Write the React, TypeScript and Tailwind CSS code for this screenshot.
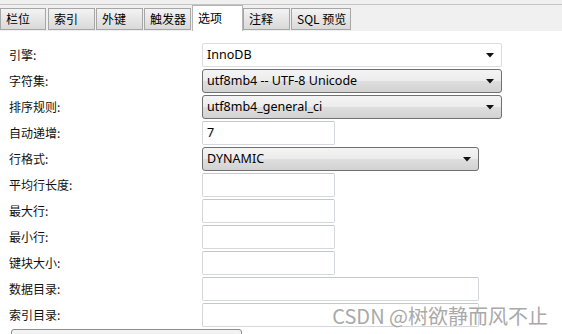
import React from "react";

const tabs = [
  { label: "栏位", w: "w-[46px]", gap: "" },
  { label: "索引", w: "w-[47px]", gap: "ml-[2px]" },
  { label: "外键", w: "w-[47px]", gap: "ml-[1px]" },
  { label: "触发器", w: "w-[47px]", gap: "ml-[1px]" },
  { label: "选项", w: "w-[51px]", gap: "", active: true },
  { label: "注释", w: "w-[47px]", gap: "" },
  { label: "SQL 预览", w: "w-[60px]", gap: "ml-[1px]" },
];

const cjk = "font-['Noto_Sans_CJK_SC','Noto_Sans',sans-serif]";
const ui = "font-['Noto_Sans','Noto_Sans_CJK_SC',sans-serif]";

function Arrow() {
  return (
    <svg width="8" height="5" viewBox="0 0 8 5" className="shrink-0">
      <path d="M0 0 H8 L4 4.5 Z" fill="#111" />
    </svg>
  );
}

function Combo({ value, width, flat = false }: { value: string; width: string; flat?: boolean }) {
  const skin = flat
    ? "bg-white border-[#d9dce1] rounded-[2px]"
    : "bg-[linear-gradient(#f4f4f4_0%,#ececec_48%,#dedede_52%,#d2d2d2_100%)] border-[#707070] rounded-[3px]";
  return (
    <div className={`flex h-[24px] ${width} items-center justify-between border pl-[4px] pr-[7px] ${skin}`}>
      <span className={`${ui} text-[12.5px] text-black`}>{value}</span>
      <Arrow />
    </div>
  );
}

function Field({ value = "", width = "w-[133px]" }: { value?: string; width?: string }) {
  return (
    <div className={`flex h-[24px] ${width} items-center rounded-[2px] border border-[#d4d7dd] border-t-[#c3c6cc] bg-white pl-[4px]`}>
      <span className={`${ui} text-[12.5px] text-black`}>{value}</span>
    </div>
  );
}

const rows: { label: string; control: React.ReactNode }[] = [
  { label: "引擎:", control: <Combo value="InnoDB" width="w-[300px]" flat /> },
  { label: "字符集:", control: <Combo value="utf8mb4 -- UTF-8 Unicode" width="w-[300px]" /> },
  { label: "排序规则:", control: <Combo value="utf8mb4_general_ci" width="w-[300px]" /> },
  { label: "自动递增:", control: <Field value="7" /> },
  { label: "行格式:", control: <Combo value="DYNAMIC" width="w-[277px]" /> },
  { label: "平均行长度:", control: <Field /> },
  { label: "最大行:", control: <Field /> },
  { label: "最小行:", control: <Field /> },
  { label: "键块大小:", control: <Field /> },
  { label: "数据目录:", control: <Field width="w-[277px]" /> },
  { label: "索引目录:", control: <Field width="w-[277px]" /> },
];

export default function App() {
  return (
    <div className="relative h-[334px] w-[562px] overflow-hidden bg-white">
      <div className="h-[4px] bg-[#f0f0f0]" />
      <div className="h-px bg-[#c4c4c4]" />
      <div className="flex h-[26px] items-end bg-[#f0f0f0]">
        {tabs.map((t) =>
          t.active ? (
            <div
              key={t.label}
              className={`${t.w} ${t.gap} ml-px flex h-[26px] items-start border border-b-0 border-[#b4b4b4] bg-white pl-[5px] pt-[3px] ${cjk} text-[12px] text-black`}
            >
              {t.label}
            </div>
          ) : (
            <div
              key={t.label}
              className={`${t.w} ${t.gap} mb-px flex h-[22px] items-center border border-[#a6a6a6] bg-[linear-gradient(#f3f3f3,#e6e6e6_50%,#d9d9d9)] pl-[5px] ${cjk} text-[12px] text-black`}
            >
              {t.label}
            </div>
          )
        )}
      </div>
      <div className="pt-[11px]">
        {rows.map((r) => (
          <div key={r.label} className="flex h-[26px] items-center">
            <div className={`w-[202px] shrink-0 pl-[9px] ${cjk} text-[12px] text-[#111]`}>{r.label}</div>
            {r.control}
          </div>
        ))}
        <div className="ml-[11px] mt-px h-[24px] w-[231px] rounded-[3px] border border-[#8c8c8c] bg-[linear-gradient(#f4f4f4,#e2e2e2)]" />
      </div>
      <div
        className={`absolute right-[14px] top-[301px] ${cjk} text-[20px] text-[#a9a9a9] [text-shadow:0_0_2px_#fff]`}
      >
        CSDN @树欲静而风不止
      </div>
    </div>
  );
}
